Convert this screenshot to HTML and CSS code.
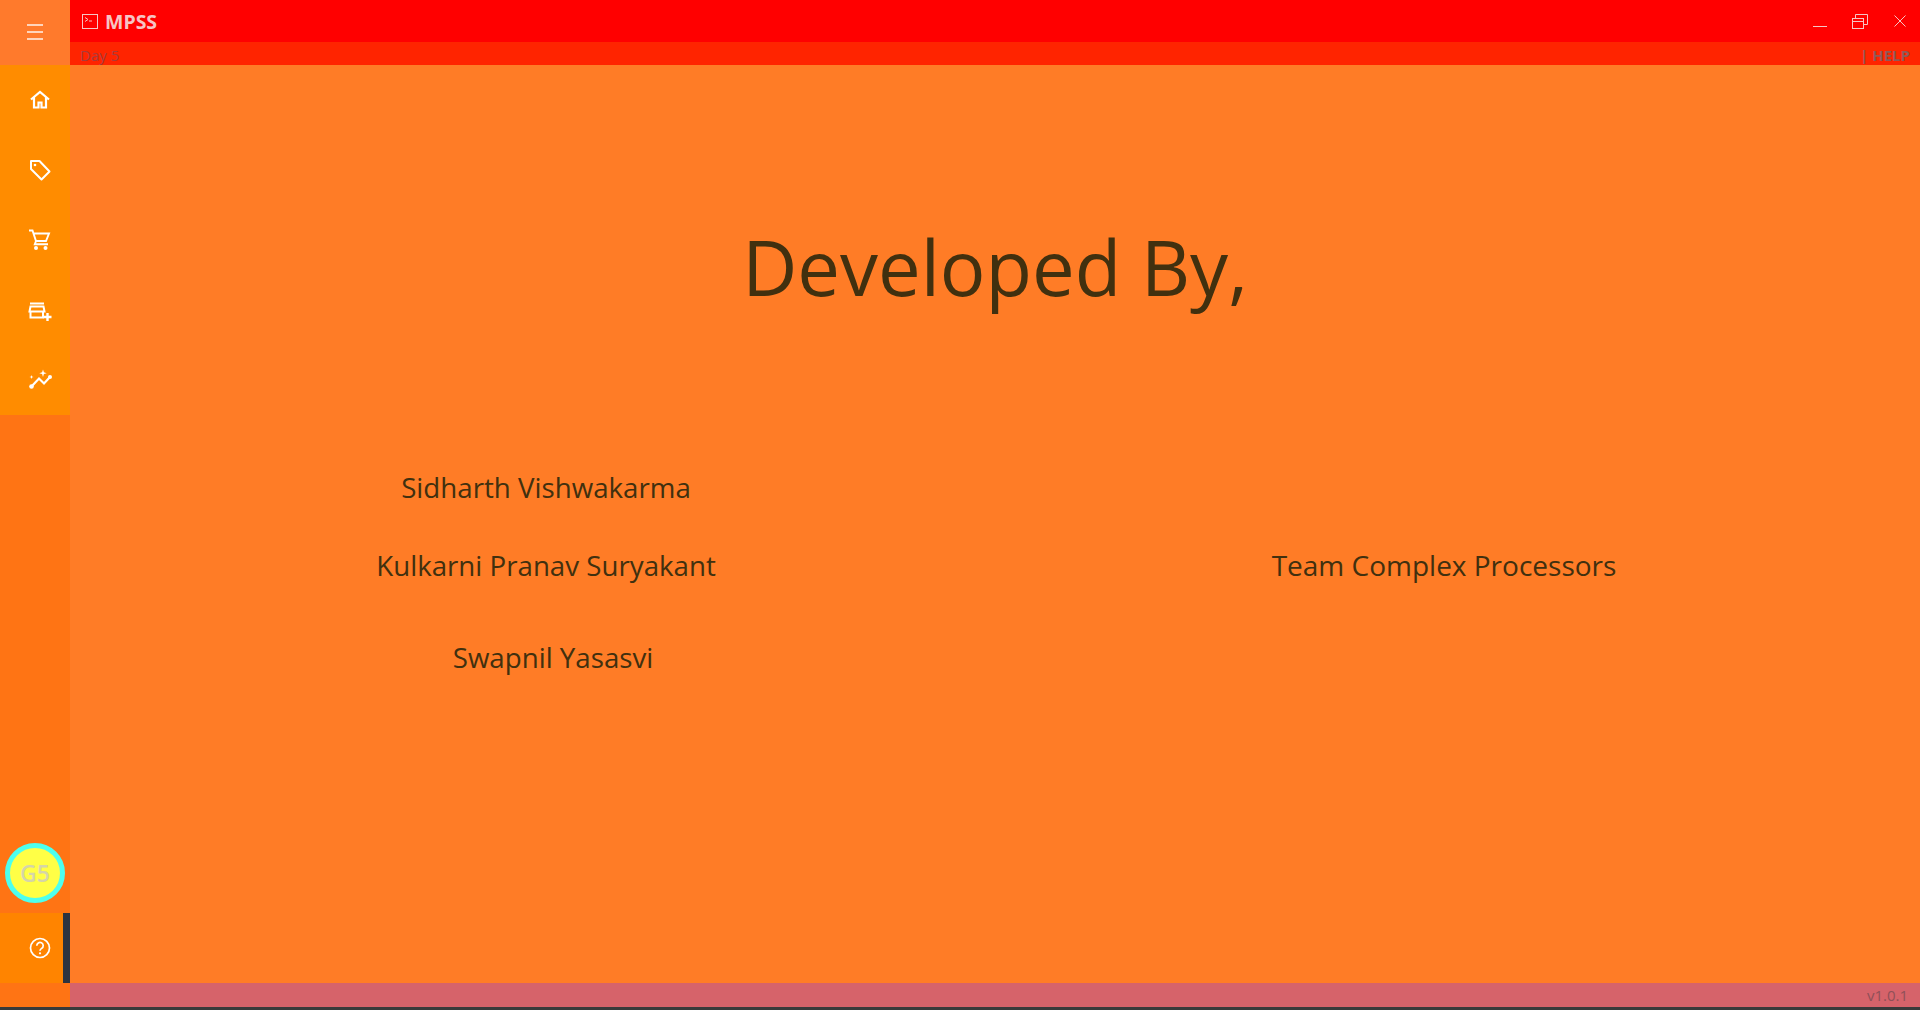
FILE: index.html
```html
<!DOCTYPE html>
<html lang="en">
<head>
  <meta charset="UTF-8">
  <title>MPSS</title>
  <link rel="stylesheet" href="styles.css">
</head>
<body>
  <div class="app">
    <aside class="sidebar">
      <div class="menu-btn">
        <svg width="16" height="16" viewBox="0 0 16 16" fill="none" stroke="#fff" stroke-width="1.400" opacity=".9"><path d="M0 1h16M0 8h16M0 15h16"/></svg>
      </div>
      <nav class="nav">
        <a class="nav-item"><svg width="24" height="24" viewBox="0 0 24 24" fill="none" stroke="#fff" stroke-width="2.200"><path d="M3 11.500 12 4l9 7.500M6 9.500V19.500h4.500v-5h3v5H18V9.500"/></svg></a>
        <a class="nav-item"><svg width="24" height="24" viewBox="0 0 24 24" fill="none" stroke="#fff" stroke-width="2"><path d="M3 3h8.500l10 10.500-8 8L3 11z" stroke-linejoin="round"/><circle cx="7" cy="7" r="1.300" fill="#fff" stroke="none"/></svg></a>
        <a class="nav-item"><svg width="24" height="24" viewBox="0 0 24 24" fill="none" stroke="#fff" stroke-width="1.900"><path d="M1 2.500h3.500L8 13h10l3-7.500H5.500M8 13l-1.200 3.200H20"/><circle cx="8" cy="20" r="2" fill="#fff" stroke="none"/><circle cx="17.500" cy="20" r="2" fill="#fff" stroke="none"/></svg></a>
        <a class="nav-item"><svg width="24" height="24" viewBox="0 0 24 24" fill="none" stroke="#fff" stroke-width="2"><path d="M2 5.500h14M1.500 13.500l1-5h13l1 5zM2.500 13.500v6h12.500v-6"/><path d="M19.500 15v8M15.500 19h8" stroke-width="2.400"/></svg></a>
        <a class="nav-item"><svg width="24" height="24" viewBox="0 0 24 24" fill="none" stroke="#fff" stroke-width="2.200"><path d="M3.500 18.500l7.500-8 5 5 6-6.500"/><circle cx="3.500" cy="18.500" r="2.300" fill="#fff" stroke="none"/><circle cx="22" cy="9" r="2" fill="#fff" stroke="none"/><path d="M15 1.500l.9 2.800 2.800.9-2.800.9-.9 2.800-.9-2.800-2.800-.9 2.800-.9zM3.500 7l.5 1.500 1.500.5-1.500.5-.5 1.500-.5-1.500L1.500 9 3 8.500z" fill="#fff" stroke="none"/></svg></a>
      </nav>
      <div class="sidebar-fill"></div>
      <div class="avatar-wrap"><div class="avatar">G5</div></div>
      <a class="help-item">
        <svg width="22" height="22" viewBox="0 0 22 22" fill="none" stroke="#fff" stroke-width="1.700"><circle cx="11" cy="11" r="9.500"/><path d="M7.800 8.800a3.200 3.200 0 1 1 4.900 2.600c-1.100.7-1.700 1.300-1.700 2.400"/><circle cx="11" cy="16.300" r="1.100" fill="#fff" stroke="none"/></svg>
      </a>
      <div class="sidebar-end"></div>
    </aside>

    <div class="content">
      <header class="titlebar">
        <svg class="app-icon" width="16" height="15" viewBox="0 0 16 15" fill="none" stroke="#f6c4c4"><rect x=".5" y=".5" width="15" height="14"/><path d="M3 3.500l3 2-3 2M7 7h3"/></svg>
        <span class="app-name">MPSS</span>
        <div class="window-btns">
          <svg width="14" height="14" viewBox="0 0 14 14" stroke="#f6c4c4" fill="none"><path d="M0 12.500h14"/></svg>
          <svg width="16" height="15" viewBox="0 0 16 15" stroke="#f6c4c4" fill="none"><rect x=".5" y="4.500" width="11" height="10"/><path d="M.5 7.500h11M3.500 4.500V.5h12v10h-4"/></svg>
          <svg class="close-btn" width="12" height="12" viewBox="0 0 12 12" stroke="#f6c4c4" fill="none"><path d="M.5.500l11 11M11.500.500l-11 11"/></svg>
        </div>
      </header>
      <div class="subbar">
        <span class="day">Day 5</span>
        <span class="help-link">| HELP</span>
      </div>

      <main class="main">
        <h1 class="heading">Developed By,</h1>
        <div class="credits">
          <p class="name">Sidharth Vishwakarma</p>
          <p class="name">Kulkarni Pranav Suryakant</p>
          <p class="name team">Team Complex Processors</p>
          <p class="name last">Swapnil Yasasvi</p>
        </div>
      </main>

      <footer class="statusbar"><span>v1.0.1</span></footer>
    </div>
  </div>
  <div class="bottom-strip"></div>
</body>
</html>
```

FILE: styles.css
```css
html, body {
  margin: 0;
  height: 100%;
  overflow: hidden;
}
body {
  font-family: "Open Sans", "Noto Sans", sans-serif;
  display: flex;
  flex-direction: column;
  background-color: #3a3a3a;
}
.app {
  flex: 1;
  display: flex;
  min-height: 0;
}
.bottom-strip {
  height: 3px;
  background-color: #3a3a3a;
}

.sidebar {
  width: 70px;
  display: flex;
  flex-direction: column;
  background-color: #ff7414;
}
.menu-btn {
  height: 65px;
  padding-bottom: 2px;
  box-sizing: border-box;
  display: flex;
  align-items: center;
  justify-content: center;
  background-color: #ff7a2c;
}
.nav {
  background-color: #ff8c00;
  display: flex;
  flex-direction: column;
}
.nav-item {
  height: 70px;
  display: flex;
  align-items: center;
  justify-content: center;
  padding-left: 10px;
  box-sizing: border-box;
}
.sidebar-fill {
  flex: 1;
}
.avatar-wrap {
  padding-bottom: 10px;
  display: flex;
  justify-content: center;
}
.avatar {
  width: 50px;
  height: 50px;
  border: 5px solid #4dffee;
  border-radius: 50%;
  background-color: #ffff46;
  color: #d5d5a8;
  font-size: 23px;
  font-weight: 600;
  line-height: 50px;
  text-align: center;
}
.help-item {
  height: 70px;
  display: flex;
  align-items: center;
  justify-content: center;
  padding-left: 17px;
  box-sizing: border-box;
  background-color: #ff8400;
  border-right: 7px solid #2c3440;
}
.sidebar-end {
  height: 24px;
}

.content {
  flex: 1;
  display: flex;
  flex-direction: column;
  min-width: 0;
}
.titlebar {
  height: 42px;
  display: flex;
  align-items: center;
  padding: 0 14px 0 12px;
  box-sizing: border-box;
  background-color: #ff0000;
}
.app-name {
  margin-left: 7px;
  font-size: 19.500px;
  font-weight: 700;
  color: #f6c4c4;
}
.window-btns {
  margin-left: auto;
  display: flex;
  align-items: center;
  gap: 25px;
}
.close-btn {
  margin-left: 1px;
}
.subbar {
  height: 23px;
  padding: 2px 10px 0;
  box-sizing: border-box;
  display: flex;
  justify-content: space-between;
  align-items: center;
  background-color: #ff2400;
  font-size: 15px;
  color: #a83c3c;
}
.help-link {
  font-weight: 700;
  color: #8f5a5a;
}

.main {
  flex: 1;
  background-color: #ff7c26;
  color: #41300f;
  min-height: 0;
}
.heading {
  margin: 0;
  padding-top: 152px;
  font-size: 76px;
  font-weight: 400;
  line-height: 100px;
  text-align: center;
}
.credits {
  margin-top: 151px;
  display: grid;
  grid-template-columns: 952px 1fr;
  padding-right: 54px;
  row-gap: 39px;
}
.name {
  margin: 0;
  grid-column: 1;
  font-size: 27.700px;
  line-height: 39px;
  text-align: center;
}
.team {
  grid-column: 2;
  font-size: 28px;
}
.last {
  margin-top: 14px;
  padding-left: 14px;
}

.statusbar {
  height: 24px;
  display: flex;
  justify-content: flex-end;
  align-items: center;
  padding: 0 12px;
  background-color: #d6636a;
  color: #8f5058;
  font-size: 15px;
}
```
